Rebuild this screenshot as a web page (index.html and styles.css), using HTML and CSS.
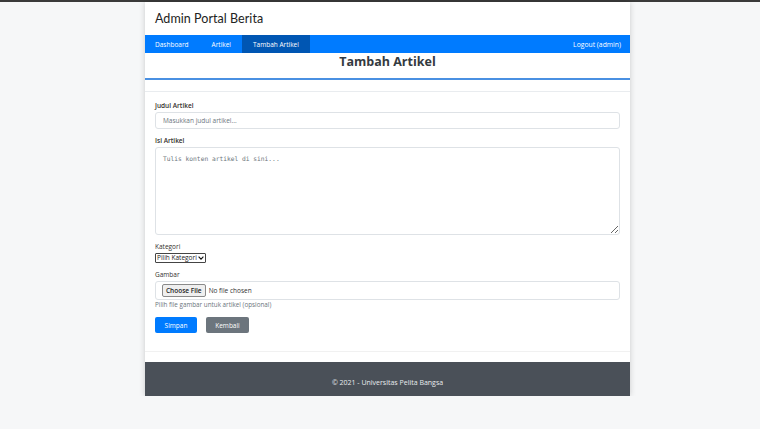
FILE: index.html
```html
<!DOCTYPE html>
<html lang="id">
<head>
<meta charset="utf-8">
<title>Tambah Artikel</title>
<link rel="stylesheet" href="styles.css">
</head>
<body>
<div class="topbar"></div>
<div class="container">
  <header class="site-header">
    <h1 class="brand">Admin Portal Berita</h1>
  </header>
  <nav class="navbar">
    <ul class="nav-left">
      <li><a href="#" class="nav-link first">Dashboard</a></li>
      <li><a href="#" class="nav-link">Artikel</a></li>
      <li><a href="#" class="nav-link active">Tambah Artikel</a></li>
    </ul>
    <a href="#" class="nav-link logout">Logout (admin)</a>
  </nav>
  <section class="page-title">
    <h2>Tambah Artikel</h2>
  </section>
  <main class="content">
    <form class="article-form">
      <div class="form-group">
        <label class="label strong" for="judul">Judul Artikel</label>
        <input id="judul" class="form-control" type="text" placeholder="Masukkan judul artikel...">
      </div>
      <div class="form-group">
        <label class="label strong" for="isi">Isi Artikel</label>
        <textarea id="isi" class="form-control textarea" placeholder="Tulis konten artikel di sini..."></textarea>
      </div>
      <div class="form-group">
        <label class="label" for="kategori">Kategori</label>
        <span class="select-wrap">
          <select id="kategori" class="select">
            <option>Pilih Kategori</option>
          </select>
          <svg class="chevron" width="6" height="4" viewBox="0 0 6 4" aria-hidden="true"><path d="M0.6 0.6 L3 3.2 L5.4 0.6" fill="none" stroke="#111" stroke-width="1.1"/></svg>
        </span>
      </div>
      <div class="form-group">
        <label class="label" for="gambar">Gambar</label>
        <div class="file-box">
          <input id="gambar" class="file-input" type="file">
        </div>
        <small class="help">Pilih file gambar untuk artikel (opsional)</small>
      </div>
      <div class="actions">
        <button type="button" class="btn btn-primary">Simpan</button>
        <button type="button" class="btn btn-secondary">Kembali</button>
      </div>
    </form>
  </main>
  <div class="spacer"></div>
  <footer class="footer">© 2021 - Universitas Pelita Bangsa</footer>
</div>
</body>
</html>
```

FILE: styles.css
```css
* { box-sizing: border-box; }
html, body { margin: 0; padding: 0; }
body {
  background: #f6f7f8;
  font-family: "Open Sans", "Noto Sans", sans-serif;
  color: #333;
}
.topbar {
  height: 2px;
  background: #3a3a3a;
}
.container {
  width: 485px;
  margin-left: 145px;
  background: #fff;
  box-shadow: 0 0 6px rgba(0,0,0,0.18);
}
.site-header {
  height: 33px;
  display: flex;
  align-items: center;
  padding-left: 10px;
}
.brand {
  margin: 0;
  font-family: Lato, "Open Sans", sans-serif;
  font-size: 12.5px;
  font-weight: 400;
  color: #222;
  letter-spacing: 0.05px;
}
.navbar {
  height: 18px;
  background: #007bff;
  display: flex;
  justify-content: space-between;
  align-items: stretch;
}
.nav-left {
  display: flex;
  list-style: none;
  margin: 0;
  padding: 0;
}
.nav-left li { display: flex; }
.nav-link {
  display: flex;
  align-items: center;
  padding: 0 11px;
  color: #fff;
  font-size: 6.5px;
  text-decoration: none;
}
.nav-link.first { padding-left: 10px; padding-right: 12px; }
.nav-link.active { background: #0056b3; }
.logout { padding-right: 9px; font-size: 6.8px; }
.page-title {
  height: 27px;
  border-bottom: 2px solid #4a90e2;
}
.page-title h2 {
  margin: 0;
  text-align: center;
  font-size: 12.5px;
  font-weight: 700;
  color: #343a40;
  line-height: 15px;
  padding-top: 1px;
}
.content {
  margin-top: 11px;
  border-top: 1px solid #e9ecef;
  padding: 10px 10px 18px;
}
.form-group {
  display: flex;
  flex-direction: column;
  margin-bottom: 8px;
}
.label {
  font-size: 6.5px;
  color: #33302c;
  margin-bottom: 2px;
  line-height: 8px;
}
.label.strong { font-weight: 600; }
.form-control {
  width: 100%;
  height: 17px;
  border: 1px solid #dee2e6;
  border-radius: 3px;
  padding: 0 7px;
  font-family: inherit;
  font-size: 6.5px;
  color: #333;
}
.form-control::placeholder { color: #6c757d; }
.textarea {
  height: 88px;
  padding: 7px 7px;
  font-family: "DejaVu Sans Mono", "Liberation Mono", monospace;
  font-size: 6.25px;
  resize: vertical;
}
.select-wrap {
  align-self: flex-start;
  display: inline-flex;
  align-items: center;
  height: 10px;
  border: 1px solid #444;
  border-radius: 1px;
  padding-right: 1px;
  background: #fff;
}
.select {
  appearance: none;
  -webkit-appearance: none;
  border: none;
  background: transparent;
  font-family: inherit;
  font-size: 6.5px;
  color: #222;
  padding: 0 1px;
  margin: 0;
  height: 8px;
  line-height: 8px;
  outline: none;
}
.chevron { display: block; }
.file-box {
  border: 1px solid #dee2e6;
  border-radius: 3px;
  height: 19px;
  display: flex;
  align-items: center;
  padding: 0 6px;
}
.file-input {
  font-size: 6.5px;
  font-family: inherit;
  color: #333;
}
.file-input::file-selector-button {
  font-family: inherit;
  font-size: 6.5px;
  font-weight: 600;
  color: #222;
  background: #efefef;
  border: 1px solid #8a8a8a;
  border-radius: 2px;
  padding: 1px 3px;
  height: 13px;
  margin-right: 3px;
}
.help {
  font-size: 6.3px;
  line-height: 8px;
  color: #6c757d;
  margin-top: 1px;
}
.actions {
  display: flex;
  gap: 9px;
}
.btn {
  height: 16px;
  border: none;
  border-radius: 2px;
  color: #fff;
  font-family: inherit;
  font-size: 6.5px;
  padding: 0;
}
.btn-primary { background: #007bff; width: 42px; }
.btn-secondary { background: #6c757d; width: 43px; }
.spacer {
  height: 11px;
  border-top: 1px solid #f1f1f1;
}
.footer {
  height: 34px;
  background: #4a5058;
  color: #e9ecef;
  font-size: 7px;
  text-align: center;
  padding-top: 16px;
}
```
